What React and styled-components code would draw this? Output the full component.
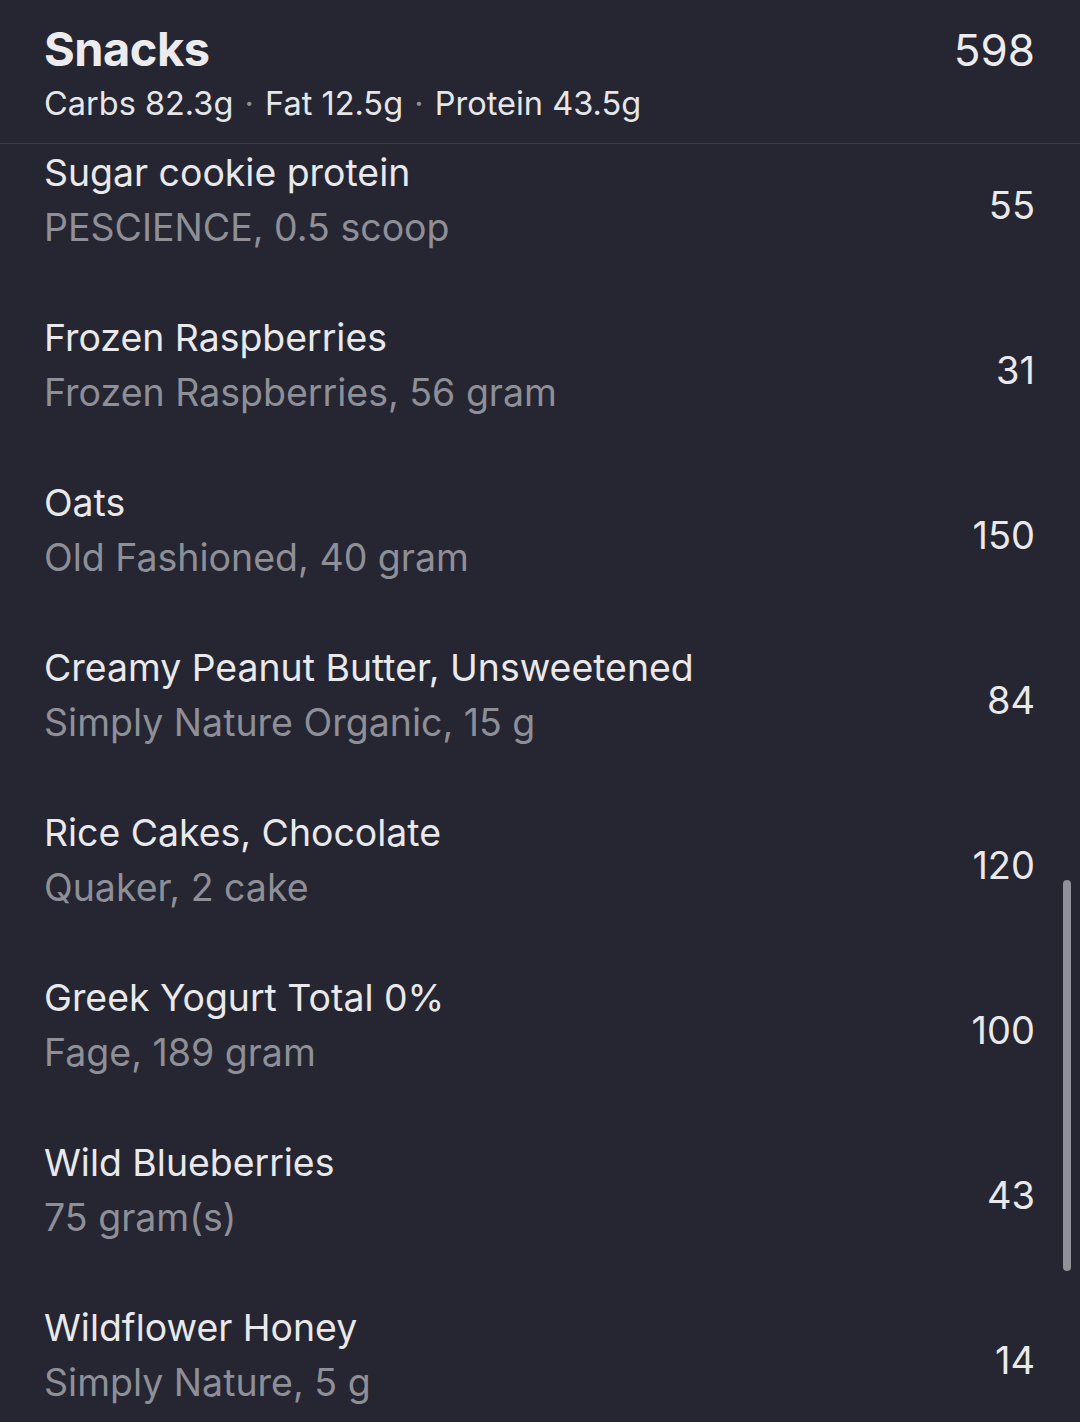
import React from 'react';
import styled, { createGlobalStyle } from 'styled-components';

const GlobalStyle = createGlobalStyle`
  html, body {
    margin: 0;
    padding: 0;
    background: #252632;
    height: 1422px;
    overflow: hidden;
  }
  body {
    font-family: Inter, "Liberation Sans", sans-serif;
    -webkit-font-smoothing: antialiased;
  }
`;

const foods = [
  { name: 'Sugar cookie protein', detail: 'PESCIENCE, 0.5 scoop', cal: 55 },
  { name: 'Frozen Raspberries', detail: 'Frozen Raspberries, 56 gram', cal: 31 },
  { name: 'Oats', detail: 'Old Fashioned, 40 gram', cal: 150 },
  { name: 'Creamy Peanut Butter, Unsweetened', detail: 'Simply Nature Organic, 15 g', cal: 84 },
  { name: 'Rice Cakes, Chocolate', detail: 'Quaker, 2 cake', cal: 120 },
  { name: 'Greek Yogurt Total 0%', detail: 'Fage, 189 gram', cal: 100 },
  { name: 'Wild Blueberries', detail: '75 gram(s)', cal: 43 },
  { name: 'Wildflower Honey', detail: 'Simply Nature, 5 g', cal: 14 },
];

const App = () => {
  return (
    <Screen>
      <GlobalStyle />
      <Header>
        <HeaderTop>
          <MealTitle>Snacks</MealTitle>
          <MealTotal>598</MealTotal>
        </HeaderTop>
        <Macros>
          Carbs 82.3g <Dot>·</Dot> Fat 12.5g <Dot>·</Dot> Protein 43.5g
        </Macros>
      </Header>
      <List>
        {foods.map((f) => (
          <Row key={f.name}>
            <Info>
              <Name>{f.name}</Name>
              <Detail>{f.detail}</Detail>
            </Info>
            <Calories>{f.cal}</Calories>
          </Row>
        ))}
      </List>
      <ScrollThumb />
    </Screen>
  );
};

const Screen = styled.div`
  position: relative;
  width: 1080px;
  height: 1422px;
  overflow: hidden;
  background: #252632;
  color: #e9e9ec;
`;

const Header = styled.header`
  padding: 20px 45px 0 44px;
  height: 123px;
  border-bottom: 1px solid #3a3b46;
`;

const HeaderTop = styled.div`
  display: flex;
  justify-content: space-between;
  align-items: baseline;
  line-height: 58px;
`;

const MealTitle = styled.h1`
  margin: 0;
  font-size: 47px;
  font-weight: 700;
  letter-spacing: -0.5px;
  color: #ececef;
`;

const MealTotal = styled.span`
  font-size: 44px;
  font-weight: 400;
  color: #ececef;
`;

const Macros = styled.div`
  margin-top: 3px;
  font-size: 32.5px;
  line-height: 44px;
  color: #e6e6e9;
`;

const Dot = styled.span`
  color: #8e8f97;
  margin: 0 2px;
`;

const List = styled.div`
  display: flex;
  flex-direction: column;
`;

const Row = styled.div`
  display: flex;
  justify-content: space-between;
  align-items: center;
  height: 165px;
  box-sizing: border-box;
  padding: 1px 45px 54px 44px;
`;

const Info = styled.div`
  display: flex;
  flex-direction: column;
`;

const Name = styled.div`
  font-size: 37.4px;
  line-height: 55px;
  color: #e9e9ec;
`;

const Detail = styled.div`
  font-size: 37.5px;
  line-height: 55px;
  color: #8e8f97;
`;

const Calories = styled.div`
  margin-top: 10px;
  font-size: 38px;
  color: #e9e9ec;
`;

const ScrollThumb = styled.div`
  position: absolute;
  right: 9px;
  top: 880px;
  width: 8px;
  height: 391px;
  border-radius: 4px;
  background: #8f9098;
`;

export default App;
